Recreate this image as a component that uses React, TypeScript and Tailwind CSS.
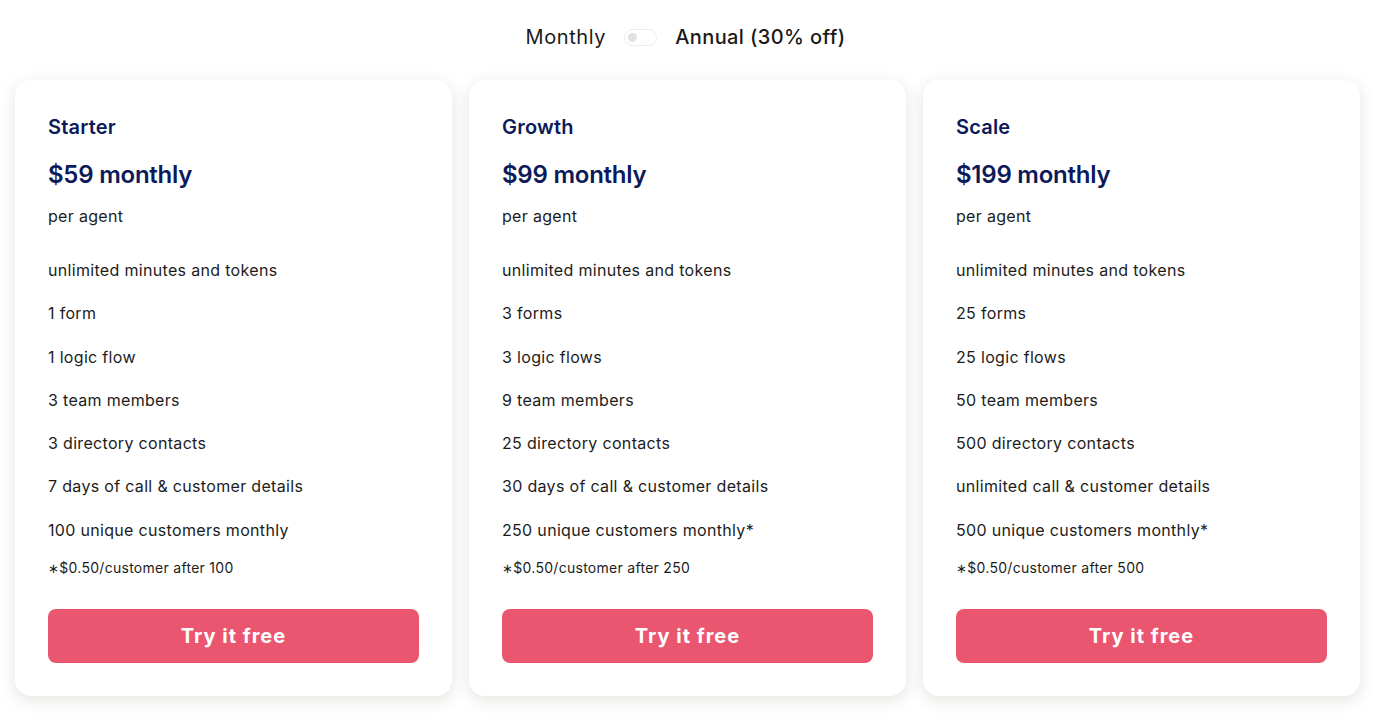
import React, { useState } from 'react';

interface Plan {
  name: string;
  price: string;
  features: string[];
  note: string;
}

const plans: Plan[] = [
  {
    name: 'Starter',
    price: '$59 monthly',
    features: [
      'unlimited minutes and tokens',
      '1 form',
      '1 logic flow',
      '3 team members',
      '3 directory contacts',
      '7 days of call & customer details',
      '100 unique customers monthly',
    ],
    note: '*$0.50/customer after 100',
  },
  {
    name: 'Growth',
    price: '$99 monthly',
    features: [
      'unlimited minutes and tokens',
      '3 forms',
      '3 logic flows',
      '9 team members',
      '25 directory contacts',
      '30 days of call & customer details',
      '250 unique customers monthly*',
    ],
    note: '*$0.50/customer after 250',
  },
  {
    name: 'Scale',
    price: '$199 monthly',
    features: [
      'unlimited minutes and tokens',
      '25 forms',
      '25 logic flows',
      '50 team members',
      '500 directory contacts',
      'unlimited call & customer details',
      '500 unique customers monthly*',
    ],
    note: '*$0.50/customer after 500',
  },
];

function PlanCard({ plan }: { plan: Plan }) {
  return (
    <div className="bg-white rounded-2xl shadow-[0_4px_16px_rgba(80,80,60,0.16)] px-[33px] pt-[33px] pb-[33px] flex flex-col">
      <h3 className="text-[20px] leading-[28px] font-semibold text-[#0d1a5a] tracking-[0.01em]">{plan.name}</h3>
      <div className="mt-[18px] text-[24px] leading-[32px] font-semibold text-[#0d1a5a] tracking-[-0.01em]">
        {plan.price}
      </div>
      <div className="mt-[13px] text-[16px] leading-[24px] text-[#1c1c1c] tracking-[0.02em]">per agent</div>
      <ul className="mt-[30px] flex flex-col gap-[19.3px]">
        {plan.features.map((f) => (
          <li key={f} className="text-[16px] leading-[24px] text-[#1c1c1c] tracking-[0.02em]">
            {f}
          </li>
        ))}
      </ul>
      <div className="mt-[16px] text-[14px] leading-[20px] text-[#1c1c1c] tracking-[0.02em]">
        <span className="text-[13px]">∗</span>
        {plan.note.slice(1)}
      </div>
      <button className="mt-[31px] h-[54px] w-full rounded-lg bg-[#ea566f] text-white text-[20px] font-bold tracking-[0.05em]">
        Try it free
      </button>
    </div>
  );
}

export default function App() {
  const [annual, setAnnual] = useState(false);

  return (
    <div className="min-h-screen bg-white font-['Inter',sans-serif] pt-[22px] px-[15px] pr-[20px]">
      {/* billing toggle */}
      <div className="flex items-center justify-center gap-[18px] h-[30px] pr-[4px]">
        <span className="text-[20px] text-[#1a1a1a] tracking-[0.03em]">Monthly</span>
        <button
          onClick={() => setAnnual(!annual)}
          className="w-[33px] h-[17px] rounded-full border border-[#ececec] bg-white flex items-center px-[3px]"
        >
          <span
            className={
              annual
                ? 'w-[9px] h-[9px] rounded-full bg-[#dcdcdc] ml-auto'
                : 'w-[9px] h-[9px] rounded-full bg-[#e2e2e2]'
            }
          />
        </button>
        <span className="text-[20px] font-medium text-[#1a1a1a] tracking-[0.02em]">Annual (30% off)</span>
      </div>

      {/* plans */}
      <div className="mt-[28px] grid grid-cols-3 gap-[17px]">
        {plans.map((p) => (
          <PlanCard key={p.name} plan={p} />
        ))}
      </div>
    </div>
  );
}
